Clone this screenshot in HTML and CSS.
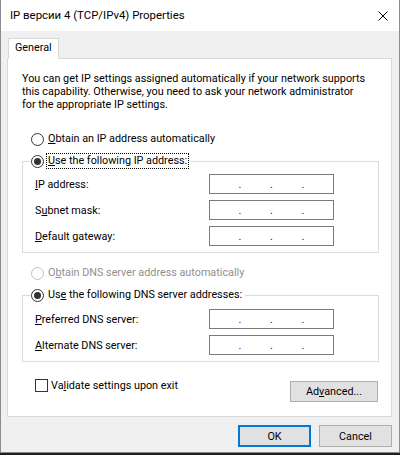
FILE: index.html
```html
<!DOCTYPE html>
<html lang="en">
<head>
    <meta charset="UTF-8">
    <title>IP версии 4 (TCP/IPv4) Properties</title>
    <link rel="stylesheet" href="styles.css">
</head>
<body>
    <div class="window">
        <div class="titlebar">
            <span class="title">IP версии 4 (TCP/IPv4) Properties</span>
            <svg class="close" width="10" height="10" viewBox="0 0 10 10">
                <path d="M0.5 0.5 L9.5 9.5 M9.5 0.5 L0.5 9.5" stroke="#000" stroke-width="1" fill="none"/>
            </svg>
        </div>

        <div class="client">
            <div class="tabs">
                <div class="tab">General</div>
            </div>

            <div class="panel">
                <p class="intro">You can get IP settings assigned automatically if your network supports<br>this capability. Otherwise, you need to ask your network administrator<br>for the appropriate IP settings.</p>

                <div class="option first">
                    <span class="radio"></span>
                    <span class="label"><u>O</u>btain an IP address automatically</span>
                </div>

                <fieldset class="group">
                    <legend class="option">
                        <span class="radio on"></span>
                        <span class="label focus"><u>U</u>se the following IP address:</span>
                    </legend>
                    <div class="fields">
                        <div class="field">
                            <span class="name"><u>I</u>P address:</span>
                            <div class="ipbox"><span class="seg"></span>.<span class="seg"></span>.<span class="seg"></span>.<span class="seg"></span></div>
                        </div>
                        <div class="field">
                            <span class="name">S<u>u</u>bnet mask:</span>
                            <div class="ipbox"><span class="seg"></span>.<span class="seg"></span>.<span class="seg"></span>.<span class="seg"></span></div>
                        </div>
                        <div class="field">
                            <span class="name"><u>D</u>efault gateway:</span>
                            <div class="ipbox"><span class="seg"></span>.<span class="seg"></span>.<span class="seg"></span>.<span class="seg"></span></div>
                        </div>
                    </div>
                </fieldset>

                <div class="option disabled">
                    <span class="radio"></span>
                    <span class="label">O<u>b</u>tain DNS server address automatically</span>
                </div>

                <fieldset class="group second">
                    <legend class="option">
                        <span class="radio on"></span>
                        <span class="label">Us<u>e</u> the following DNS server addresses:</span>
                    </legend>
                    <div class="fields">
                        <div class="field">
                            <span class="name"><u>P</u>referred DNS server:</span>
                            <div class="ipbox"><span class="seg"></span>.<span class="seg"></span>.<span class="seg"></span>.<span class="seg"></span></div>
                        </div>
                        <div class="field">
                            <span class="name"><u>A</u>lternate DNS server:</span>
                            <div class="ipbox"><span class="seg"></span>.<span class="seg"></span>.<span class="seg"></span>.<span class="seg"></span></div>
                        </div>
                    </div>
                </fieldset>

                <div class="bottom-row">
                    <div class="check">
                        <span class="box"></span>
                        <span class="label">Va<u>l</u>idate settings upon exit</span>
                    </div>
                    <button class="btn advanced">Ad<u>v</u>anced...</button>
                </div>
            </div>

            <div class="footer">
                <button class="btn default">OK</button>
                <button class="btn">Cancel</button>
            </div>
        </div>
    </div>
</body>
</html>
```

FILE: styles.css
```css
/* Base */
* {
    margin: 0;
    padding: 0;
    box-sizing: border-box;
}

body {
    background: #1f1f1f;
    font-family: Roboto, 'Noto Sans', sans-serif;
    font-size: 10.8px;
    color: #000;
}

u {
    text-decoration: underline;
    text-underline-offset: 1px;
}

/* Window frame */
.window {
    width: 400px;
    height: 453px;
    background: #f0f0f0;
    border: 1px solid #8c8c8c;
    border-top: none;
}

.titlebar {
    height: 31px;
    background: #fff;
    display: flex;
    align-items: center;
    padding-left: 9px;
    padding-right: 11px;
}

.title {
    flex: 1;
    font-size: 11.4px;
    line-height: 16px;
    padding-bottom: 1px;
}

.close {
    display: block;
}

/* Client area */
.client {
    padding: 6px 7px 0 6px;
}

.tabs {
    display: flex;
    height: 21px;
    padding-top: 1px;
}

.tab {
    position: relative;
    z-index: 1;
    margin-left: 1px;
    height: 21px;
    padding: 0 6px;
    line-height: 18px;
    background: #fff;
    border: 1px solid #d9d9d9;
    border-bottom: none;
}

.panel {
    height: 359px;
    background: #fff;
    border: 1px solid #d9d9d9;
    padding: 13px 13px 0 14px;
}

.intro {
    line-height: 13px;
    white-space: nowrap;
}

/* Radio options */
.option {
    display: flex;
    align-items: center;
    height: 16px;
    margin-left: 9px;
    white-space: nowrap;
}

.option.first {
    margin-top: 20px;
}

.option.disabled {
    margin-top: 12px;
    color: #8f8f8f;
}

.radio {
    flex: none;
    width: 13px;
    height: 13px;
    border: 1px solid #333;
    border-radius: 50%;
    display: flex;
    align-items: center;
    justify-content: center;
    margin-right: 2px;
}

.radio.on::after {
    content: "";
    width: 7px;
    height: 7px;
    border-radius: 50%;
    background: #333;
}

.disabled .radio {
    border-color: #c2c2c2;
}

.label {
    line-height: 14px;
    padding: 0 1px;
    border: 1px solid transparent;
}

.label.focus {
    border: 1px dotted #000;
}

/* Group boxes */
.group {
    margin-top: 6px;
    width: 357px;
    border: 1px solid #dcdcdc;
    padding: 5px 0 6px 8px;
    min-width: 0;
}

.group.second {
    padding-top: 6px;
}

.group legend.option {
    margin-left: 0;
    padding-right: 1px;
}

.fields {
    display: flex;
    flex-direction: column;
    gap: 6px;
    padding-left: 4px;
}

.field {
    display: flex;
    align-items: center;
    height: 20px;
}

.name {
    width: 174px;
}

.ipbox {
    width: 125px;
    height: 20px;
    border: 1px solid #7a7a7a;
    background: #fff;
    display: flex;
    align-items: center;
    color: #10104a;
    line-height: 16px;
    padding-top: 1px;
}

.seg {
    width: 30px;
}

/* Checkbox + Advanced */
.bottom-row {
    display: flex;
    align-items: flex-start;
    margin-top: 17px;
}

.check {
    display: flex;
    align-items: center;
    margin-left: 13px;
    height: 13px;
}

.box {
    width: 13px;
    height: 13px;
    border: 1px solid #333;
    background: #fff;
    margin-right: 1px;
}

.btn {
    font-family: inherit;
    font-size: 10.8px;
    color: #000;
    background: #e1e1e1;
    border: 1px solid #adadad;
    height: 22px;
}

.advanced {
    margin-left: auto;
    margin-top: 2px;
    width: 88px;
    height: 21px;
}

/* Dialog buttons */
.footer {
    display: flex;
    justify-content: flex-end;
    gap: 8px;
    margin-top: 8px;
}

.footer .btn {
    width: 73px;
}

.btn.default {
    border: 2px solid #0078d7;
}
```
